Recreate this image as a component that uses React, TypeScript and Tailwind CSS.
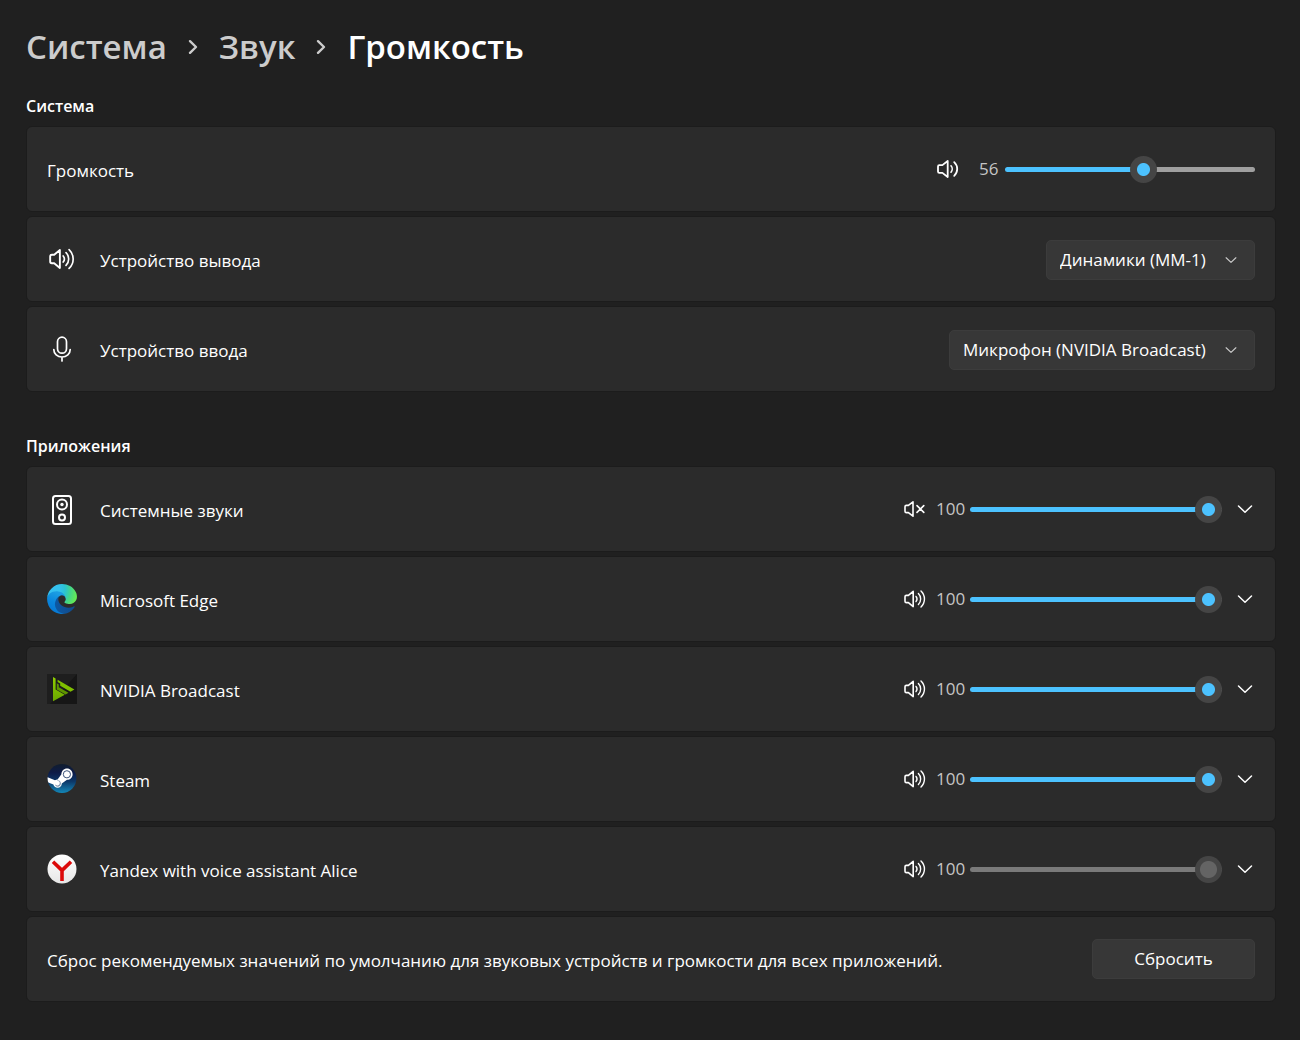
import React, { useState } from 'react';

type IconProps = { className?: string };

const SpeakerIcon: React.FC<IconProps & { waves: 0 | 2 | 3 }> = ({ className, waves }) => (
  <svg className={className} viewBox="0 0 22 22" fill="none" stroke="currentColor" strokeWidth={1.6} strokeLinecap="round" strokeLinejoin="round" aria-hidden="true">
    {waves === 2 && (
      <>
        <path d="M1 8.4v5.2c0 .8.5 1.300 1.300 1.300h3.100l5.300 4.100V3L5.400 7.100H2.300C1.500 7.100 1 7.600 1 8.400z" strokeWidth={1.8} />
        <path d="M14 7.800c1.600 1.800 1.600 4.600 0 6.400" />
        <path d="M17.200 4.200c4 3.800 4 9.800 0 13.600" strokeWidth={1.8} />
      </>
    )}
    {waves === 3 && (
      <>
        <path d="M1 8.800v4.400c0 .9.500 1.400 1.400 1.400h2l4.800 4V3.400L4.400 7.400h-2C1.500 7.400 1 7.900 1 8.800z" />
        <path d="M12 8.400c1.200 1.500 1.200 3.700 0 5.200" strokeWidth={1.400} />
        <path d="M14.400 5.600c3 3 3 7.800 0 10.800" strokeWidth={1.400} />
        <path d="M17 3c4.600 4.400 4.600 11.600 0 16" strokeWidth={1.400} />
      </>
    )}
    {waves === 0 && (
      <>
        <path d="M1 8.800v4.400c0 .9.500 1.400 1.400 1.400h2l4.600 3.600V3.800L4.400 7.400h-2C1.500 7.400 1 7.900 1 8.800z" />
        <path d="M13 7.600l6.800 6.800M19.800 7.600L13 14.400" />
      </>
    )}
  </svg>
);

const MicrophoneIcon: React.FC<IconProps> = ({ className }) => (
  <svg className={className} viewBox="0 0 30 30" fill="none" stroke="currentColor" strokeWidth={1.7} strokeLinecap="round" aria-hidden="true">
    <rect x="10.500" y="3.200" width="9" height="16" rx="4.500" />
    <path d="M6.800 15.500c0 4.300 3.600 7.500 8.200 7.500s8.200-3.200 8.200-7.500M15 23v4" />
  </svg>
);

const SpeakerBoxIcon: React.FC<IconProps> = ({ className }) => (
  <svg className={className} viewBox="0 0 30 32" fill="none" stroke="currentColor" strokeWidth={2} aria-hidden="true">
    <rect x="6" y="3" width="18" height="28" rx="2.500" />
    <circle cx="15" cy="11.500" r="5" />
    <circle cx="15" cy="11.500" r="1.700" fill="currentColor" stroke="none" />
    <circle cx="15" cy="24.500" r="3" />
  </svg>
);

const ChevronIcon: React.FC<IconProps> = ({ className }) => (
  <svg className={className} viewBox="0 0 16 16" fill="none" stroke="currentColor" strokeWidth={1.5} strokeLinecap="round" strokeLinejoin="round" aria-hidden="true">
    <path d="M1.500 5l6.500 6.200L14.500 5" />
  </svg>
);

const CrumbSeparator: React.FC = () => (
  <svg className="mx-5 h-4 w-3 shrink-0" viewBox="0 0 12 16" fill="none" stroke="currentColor" strokeWidth={2.400} strokeLinecap="round" strokeLinejoin="round" aria-hidden="true">
    <path d="M3 2.200L9 8l-6 5.800" />
  </svg>
);

const EdgeIcon: React.FC<IconProps> = ({ className }) => (
  <svg className={className} viewBox="4 4 257 257" aria-hidden="true">
    <defs>
      <linearGradient id="edge-dark" x1="63" y1="178" x2="241" y2="178" gradientUnits="userSpaceOnUse">
        <stop offset="0" stopColor="#0c59a4" />
        <stop offset="1" stopColor="#114a8b" />
      </linearGradient>
      <linearGradient id="edge-blue" x1="110" y1="90" x2="40" y2="240" gradientUnits="userSpaceOnUse">
        <stop offset="0" stopColor="#1b9de2" />
        <stop offset="0.5" stopColor="#0a86dc" />
        <stop offset="1" stopColor="#0678d4" />
      </linearGradient>
      <radialGradient id="edge-green" cx="30" cy="50" r="235" gradientUnits="userSpaceOnUse">
        <stop offset="0" stopColor="#35c1f1" />
        <stop offset="0.35" stopColor="#34c1ed" />
        <stop offset="0.55" stopColor="#2bc3d2" />
        <stop offset="0.75" stopColor="#43d58a" />
        <stop offset="1" stopColor="#66eb52" />
      </radialGradient>
    </defs>
    <path fill="url(#edge-dark)" d="M235.68 195.46a93.73 93.73 0 01-10.54 4.71 101.87 101.87 0 01-35.9 6.46c-47.32 0-88.54-32.55-88.54-74.32A31.48 31.48 0 01117.13 105c-42.8 1.8-53.8 46.4-53.8 72.53 0 73.88 68.09 81.37 82.76 81.37 7.91 0 19.84-2.3 27-4.56l1.31-.44a128.34 128.34 0 0066.6-52.8 4 4 0 00-5.32-5.64z" />
    <path fill="url(#edge-blue)" d="M110.34 246.34A79.2 79.2 0 0187.6 225a80.72 80.72 0 0129.53-120c3.12-1.47 8.45-4.13 15.54-4a32.35 32.35 0 0125.69 13 31.88 31.88 0 016.36 18.66c0-.21 24.46-79.6-80-79.6-43.9 0-80 41.66-80 78.21a130.15 130.15 0 0012.11 56 128 128 0 00156.38 67.11 75.55 75.55 0 01-62.78-8z" />
    <path fill="url(#edge-green)" d="M156.94 153.78c-.81 1.05-3.3 2.5-3.3 5.66 0 2.61 1.7 5.12 4.72 7.23 14.38 10 41.49 8.68 41.56 8.68a59.56 59.56 0 0030.27-8.35A61.38 61.38 0 00260.62 114c.26-22.41-8-37.31-11.34-43.91C228.09 28.76 182.35 5 132.62 5a128 128 0 00-128 126.2c.48-36.54 36.8-66.05 80-66.05 3.5 0 23.46.34 42 10.07 16.34 8.58 24.9 18.94 30.85 29.21 6.18 10.67 7.28 24.15 7.28 29.52s-2.74 13.33-7.81 19.83z" />
  </svg>
);

const BroadcastIcon: React.FC<IconProps> = ({ className }) => (
  <svg className={className} viewBox="0 0 30 30" aria-hidden="true">
    <defs>
      <linearGradient id="broadcast-green" x1="0" y1="0" x2="0" y2="1">
        <stop offset="0" stopColor="#8fce00" />
        <stop offset="1" stopColor="#6aa800" />
      </linearGradient>
    </defs>
    <rect width="30" height="30" fill="#1e1e1e" />
    <path d="M30 0v30H3z" fill="#161616" />
    <path d="M6 3l2.600 1.600V15.500l9.200 5.200L6 27.300z" fill="url(#broadcast-green)" />
    <path d="M9.800 9.200l2 1.200v2.800l9.700 5.600-2.900 1.600-8.800-5z" fill="#5f9600" />
    <path d="M10.600 5.700l16.800 9.800-3.900 2.200-10.300-6V9.400l-2.600-1.500z" fill="#7fbf00" />
  </svg>
);

const SteamIcon: React.FC<IconProps> = ({ className }) => (
  <svg className={className} viewBox="0 0 30 30" aria-hidden="true">
    <defs>
      <linearGradient id="steam-blue" x1="0" y1="0" x2="0" y2="1">
        <stop offset="0" stopColor="#111d2e" />
        <stop offset="0.3" stopColor="#0d1b48" />
        <stop offset="0.6" stopColor="#0c3768" />
        <stop offset="1" stopColor="#1387b8" />
      </linearGradient>
      <clipPath id="steam-clip">
        <circle cx="15" cy="14.500" r="14.400" />
      </clipPath>
    </defs>
    <circle cx="15" cy="14.500" r="14.400" fill="url(#steam-blue)" />
    <g clipPath="url(#steam-clip)">
      <path d="M0 13.100l8 3.200c.8-.5 1.600-.7 2.600-.7l3.800-5.400c0-3.200 2.500-5.600 5.600-5.600s5.600 2.500 5.600 5.600-2.500 5.600-5.600 5.600l-5.200 3.800c0 2.400-1.800 4.200-4.200 4.200-2.100 0-3.800-1.400-4.200-3.300L0 17.900z" fill="#fff" />
    </g>
    <circle cx="19.900" cy="10.300" r="3.600" fill="none" stroke="#3c5379" strokeWidth={1} />
    <path d="M8 20.600l1.600.6c1.200.5 2.500 0 3-1.200.5-1.200 0-2.500-1.200-3l-1.500-.6c1.900-.6 4 .7 4 3.100 0 1.900-1.400 3.300-3.200 3.300-1.300 0-2.300-.8-2.700-2.200z" fill="#8296b0" />
  </svg>
);

const YandexIcon: React.FC<IconProps> = ({ className }) => (
  <svg className={className} viewBox="0 0 30 30" fill="none" aria-hidden="true">
    <defs>
      <linearGradient id="yandex-white" x1="0" y1="0" x2="0" y2="1">
        <stop offset="0" stopColor="#ffffff" />
        <stop offset="1" stopColor="#e6e6e6" />
      </linearGradient>
    </defs>
    <circle cx="15" cy="15" r="14.500" fill="url(#yandex-white)" />
    <path d="M6 7.800l9 8.600 9-8.600M15 16v11" stroke="#dc0a0a" strokeWidth={3.600} />
  </svg>
);

const apps = [
  { id: 'system', name: 'Системные звуки', icon: <SpeakerBoxIcon className="h-8 w-[30px]" />, muted: true, disabled: false },
  { id: 'edge', name: 'Microsoft Edge', icon: <EdgeIcon className="size-[30px]" />, muted: false, disabled: false },
  { id: 'broadcast', name: 'NVIDIA Broadcast', icon: <BroadcastIcon className="size-[30px]" />, muted: false, disabled: false },
  { id: 'steam', name: 'Steam', icon: <SteamIcon className="size-[30px]" />, muted: false, disabled: false },
  { id: 'yandex', name: 'Yandex with voice assistant Alice', icon: <YandexIcon className="size-[30px]" />, muted: false, disabled: true },
];

type SliderProps = {
  id: string;
  value: number;
  onChange: (value: number) => void;
  disabled?: boolean;
};

const THUMB = 27;

const VolumeSlider: React.FC<SliderProps> = ({ id, value, onChange, disabled = false }) => {
  const fill = disabled ? '#7a7a7a' : '#4cc2ff';
  const rest = disabled ? '#7a7a7a' : '#9f9f9f';
  // the filled part ends under the centre of the thumb
  const stop = `calc(${THUMB / 2}px + (100% - ${THUMB}px) * ${value / 100})`;

  return (
    <input
      id={id}
      type="range"
      min={0}
      max={100}
      value={value}
      disabled={disabled}
      onChange={(e) => onChange(Number(e.target.value))}
      style={{ background: `linear-gradient(to right, ${fill} ${stop}, ${rest} ${stop})` }}
      className="h-[5px] w-full appearance-none rounded-full outline-none [&::-webkit-slider-thumb]:size-[27px] [&::-webkit-slider-thumb]:appearance-none [&::-webkit-slider-thumb]:rounded-full [&::-webkit-slider-thumb]:bg-[radial-gradient(circle,#4cc2ff_6px,#454545_7px)] disabled:[&::-webkit-slider-thumb]:bg-[radial-gradient(circle,#646464_8px,#454545_9px)]"
    />
  );
};

const Card: React.FC<{ children: React.ReactNode }> = ({ children }) => (
  <div className="flex min-h-[86px] items-center rounded-md border border-[#1c1c1c] bg-[#2b2b2b] px-5">
    {children}
  </div>
);

const DeviceSelect: React.FC<{ id: string; device: string }> = ({ id, device }) => (
  <div className="relative mt-0.5 ml-auto">
    <select
      id={id}
      className="h-10 appearance-none rounded-[5px] border border-[#3c3c3c] bg-[#373737] pr-12 pl-[13px] text-white outline-none"
    >
      <option>{device}</option>
    </select>
    <ChevronIcon className="pointer-events-none absolute top-3.5 right-[18px] size-3 text-[#cccccc]" />
  </div>
);

const App: React.FC = () => {
  const [volume, setVolume] = useState(56);
  const [levels, setLevels] = useState<Record<string, number>>({});

  return (
    <main className="min-h-screen bg-[#202020] pt-6 pr-6 pb-10 pl-[26px] font-['Open_Sans','Noto_Sans',sans-serif] text-[17px] leading-6 text-white">
      {/* Breadcrumb */}
      <nav className="flex items-center text-[33px] leading-[46px] font-semibold text-[#cccccc]">
        <a href="#system">Система</a>
        <CrumbSeparator />
        <a href="#sound">Звук</a>
        <CrumbSeparator />
        <h1 className="text-white">Громкость</h1>
      </nav>

      {/* System */}
      <section className="mt-6">
        <h2 className="mb-2 text-base font-semibold">Система</h2>
        <div className="flex flex-col gap-1">
          <Card>
            <label htmlFor="volume" className="pt-1">Громкость</label>
            <div className="ml-auto flex items-center">
              <button type="button" aria-label="Отключить звук">
                <SpeakerIcon waves={2} className="size-[22px]" />
              </button>
              <output htmlFor="volume" className="ml-5 w-[26px] text-[#c5c5c5]">{volume}</output>
              <div className="flex w-[250px]">
                <VolumeSlider id="volume" value={volume} onChange={setVolume} />
              </div>
            </div>
          </Card>
          <Card>
            <SpeakerIcon waves={3} className="mx-0.5 size-[26px]" />
            <label htmlFor="output" className="ml-[23px] pt-1">Устройство вывода</label>
            <DeviceSelect id="output" device="Динамики (MM-1)" />
          </Card>
          <Card>
            <MicrophoneIcon className="size-[30px]" />
            <label htmlFor="input" className="ml-[23px] pt-1">Устройство ввода</label>
            <DeviceSelect id="input" device="Микрофон (NVIDIA Broadcast)" />
          </Card>
        </div>
      </section>

      {/* Apps */}
      <section className="mt-[42px]">
        <h2 className="mb-2 text-base font-semibold">Приложения</h2>
        <div className="flex flex-col gap-1">
          {apps.map((app) => {
            const level = levels[app.id] ?? 100;
            return (
              <Card key={app.id}>
                {app.icon}
                <label htmlFor={app.id} className="ml-[23px] pt-1">{app.name}</label>
                <div className="ml-auto flex items-center">
                  <button type="button" aria-label="Отключить звук">
                    <SpeakerIcon waves={app.muted ? 0 : 3} className="size-[22px]" />
                  </button>
                  <output htmlFor={app.id} className="ml-2.5 w-[34px] text-[#c5c5c5]">{level}</output>
                  <div className="flex w-[252px]">
                    <VolumeSlider
                      id={app.id}
                      value={level}
                      disabled={app.disabled}
                      onChange={(value) => setLevels({ ...levels, [app.id]: value })}
                    />
                  </div>
                  <button type="button" aria-label="Развернуть" className="mr-0.5 ml-[15px]">
                    <ChevronIcon className="size-4" />
                  </button>
                </div>
              </Card>
            );
          })}
          <Card>
            <p className="pt-1">Сброс рекомендуемых значений по умолчанию для звуковых устройств и громкости для всех приложений.</p>
            <button type="button" className="ml-auto h-10 w-[163px] shrink-0 rounded-[5px] border border-[#3c3c3c] bg-[#373737]">
              Сбросить
            </button>
          </Card>
        </div>
      </section>
    </main>
  );
};

export default App;
